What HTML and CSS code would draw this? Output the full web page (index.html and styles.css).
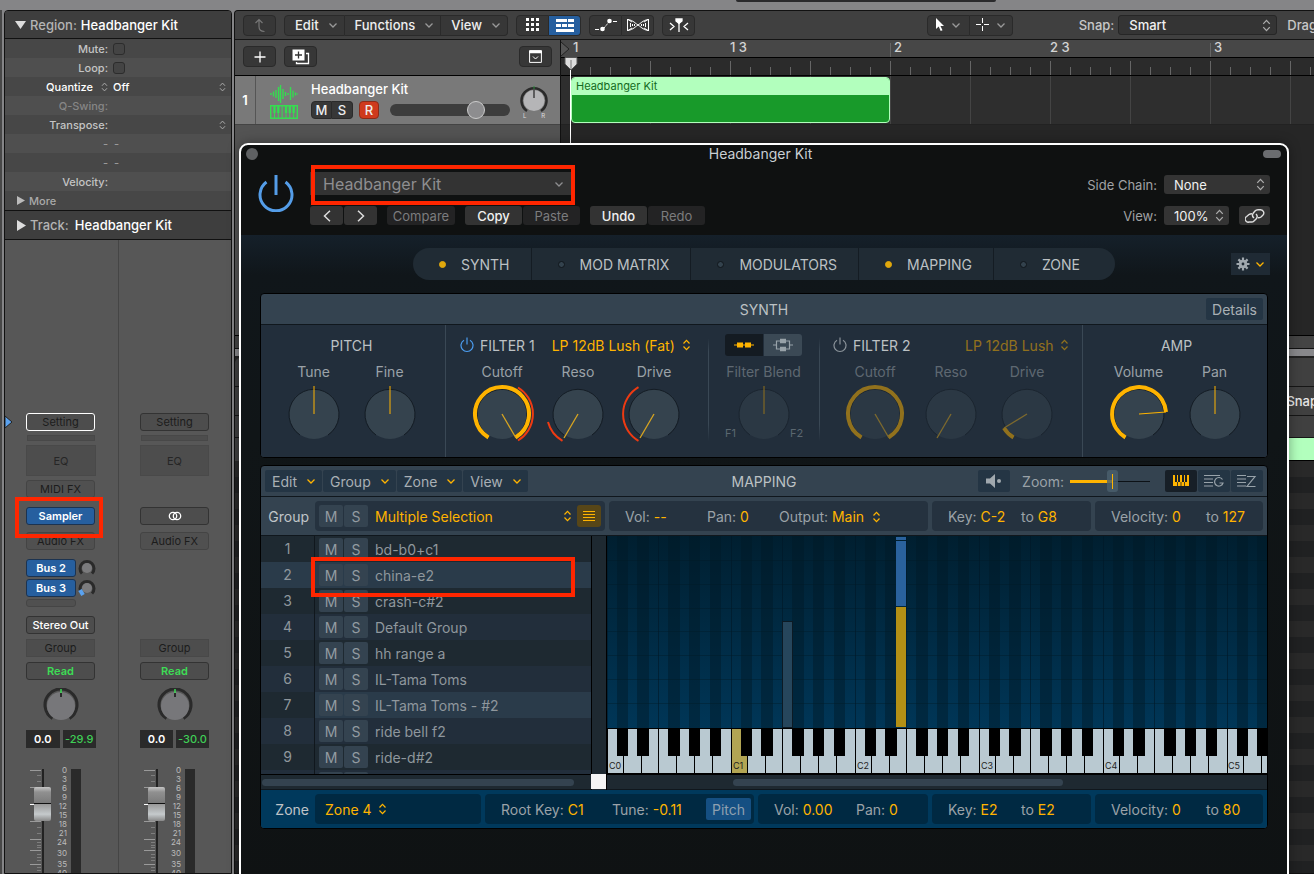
FILE: index.html
```html
<!DOCTYPE html>
<html lang="en">
<head>
  <meta charset="UTF-8">
  <meta name="viewport" content="width=device-width, initial-scale=1.0">
  <title>Headbanger Kit</title>
  <link rel="stylesheet" href="styles.css">
</head>
<body>

<!-- icon sprite -->
<svg class="sprite" width="0" height="0" aria-hidden="true">
  <symbol id="chev" viewBox="0 0 10 10"><path d="M1.500 3.500 5 7l3.500-3.500" fill="none" stroke="currentColor" stroke-width="1.300"/></symbol>
  <symbol id="updown" viewBox="0 0 8 12"><path d="M1 4.500 4 1.300l3 3.200M1 7.500l3 3.200 3-3.200" fill="none" stroke="currentColor" stroke-width="1.200"/></symbol>
  <symbol id="power" viewBox="0 0 36 38"><path d="M8.500 8A16 16 0 1 0 27.500 8M18 1v20" fill="none" stroke="currentColor" stroke-width="3"/></symbol>
  <symbol id="power-sm" viewBox="0 0 14 16"><path d="M4 3.300A6 6 0 1 0 10 3.300M7 .5v7" fill="none" stroke="currentColor" stroke-width="1.200"/></symbol>
  <symbol id="pan" viewBox="0 0 36 34">
    <path d="M9.500 30.500A16 16 0 1 1 26.500 30.500" fill="none" stroke="#2a2a2a" stroke-width="3"/>
    <circle cx="18" cy="18" r="14" fill="#77777a"/>
    <path d="M18 5v4" stroke="#111" stroke-width="1.500"/><path d="M18 1v4" stroke="#3ddc55" stroke-width="1.500"/>
  </symbol>
  <symbol id="ticks" viewBox="0 0 16 120">
    <path d="M0 1.500h11M0 18.500h11M0 52.500h11M0 70.500h11M0 81.500h11M0 95.500h11" stroke="#9a9a9a"/>
    <path d="M7 6.500h4M7 12.500h4M7 24.500h4M7 30.500h4M7 40.500h4M7 46.500h4M7 58.500h4M7 64.500h4M7 73.500h4M7 76.500h4M7 78.500h4M7 85.500h4M7 88.500h4M7 91.500h4M7 98.500h4M7 101.500h4M7 104.500h4" stroke="#7e7e7e"/>
    <path d="M0 35.500h11" stroke="#fff"/>
    <path d="M13 0v120" stroke="#222" stroke-width="2"/>
  </symbol>
  <symbol id="dial" viewBox="-32 -32 64 64"><circle r="25" fill="#35434e"/><path d="M-14 21A25 25 0 1 1 14 21" fill="none" stroke="#141c24"/></symbol>
</svg>

<div class="titlebar"><div class="lcd"></div></div>

<div class="app">
  <div class="edge"></div>

  <aside class="inspector">
    <h2 class="insp-head"><svg width="11" height="9" viewBox="0 0 11 9"><path d="M0 1h11L5.500 9z" fill="#ddd"/></svg><span>Region:</span> Headbanger Kit</h2>
    <div class="params">
      <div class="param"><label for="mute">Mute:</label><input type="checkbox" id="mute"></div>
      <div class="param"><label for="loop">Loop:</label><input type="checkbox" id="loop"></div>
      <div class="param bright"><label for="quantize">Quantize <svg width="7" height="10"><use href="#updown"/></svg></label><select id="quantize"><option>Off</option></select><svg class="end" width="7" height="10"><use href="#updown"/></svg></div>
      <div class="param dim"><span class="name">Q-Swing:</span></div>
      <div class="param"><span class="name">Transpose:</span><svg class="end" width="7" height="10"><use href="#updown"/></svg></div>
      <div class="param dash"><span class="name">-</span><span>-</span></div>
      <div class="param dash"><span class="name">-</span><span>-</span></div>
      <div class="param"><span class="name">Velocity:</span></div>
      <div class="param more"><svg width="8" height="9" viewBox="0 0 8 9"><path d="M0 0v9l8-4.500z" fill="#bbb"/></svg>More</div>
    </div>
    <h2 class="insp-head track-head"><svg width="9" height="11" viewBox="0 0 9 11"><path d="M0 0v11l9-5.500z" fill="#ddd"/></svg><span>Track:</span> Headbanger Kit</h2>

    <div class="strips">
      <section class="strip">
        <svg class="arrow" width="8" height="14" viewBox="0 0 8 14"><path d="M0 1l7 6-7 6z" fill="#5aa2f0" stroke="#222"/></svg>
        <button class="slot setting selected">Setting</button>
        <div class="thin"></div>
        <button class="eq">EQ</button>
        <button class="slot faint midi">MIDI FX</button>
        <div class="marked instrument">
          <button class="slot blue">Sampler</button>
          <div class="mark mark-sampler"></div>
        </div>
        <button class="slot faint">Audio FX</button>
        <div class="sends">
          <div class="send"><button class="slot blue">Bus 2</button><svg width="18" height="18" viewBox="0 0 18 18"><path d="M4 14.500A7 7 0 1 1 14 14.500" fill="none" stroke="#2a2a2a" stroke-width="3"/><circle cx="9" cy="9" r="5" fill="#7b7b7d"/></svg></div>
          <div class="send"><button class="slot blue">Bus 3</button><svg width="18" height="18" viewBox="0 0 18 18"><path d="M4 14.500A7 7 0 1 1 14 14.500" fill="none" stroke="#2a2a2a" stroke-width="3"/><circle cx="9" cy="9" r="5" fill="#7b7b7d"/><path d="M2 11l3 5" stroke="#5aa2f0" stroke-width="4"/></svg></div>
          <div class="stub"></div>
        </div>
        <button class="slot output">Stereo Out</button>
        <button class="slot group">Group</button>
        <button class="slot read">Read</button>
        <svg class="pan" width="36" height="34"><use href="#pan"/></svg>
        <div class="readouts"><output>0.0</output><output class="peak">-29.9</output></div>
        <div class="levels">
          <svg width="16" height="120"><use href="#ticks"/></svg>
          <input class="fader" type="range" min="0" max="100" value="80" aria-label="Volume, track 1">
          <ul class="scale"><li>0</li><li>3</li><li>6</li><li>9</li><li>12</li><li>15</li><li>18</li><li>21</li><li>24</li><li class="wide">30</li><li class="wide">35</li><li>40</li></ul>
          <div class="meter"></div>
        </div>
      </section>
      <section class="strip">
        <button class="slot setting">Setting</button>
        <div class="thin"></div>
        <button class="eq">EQ</button>
        <div class="slot-gap"></div>
        <div class="instrument">
          <button class="slot" aria-label="Stereo"><svg width="14" height="10" viewBox="0 0 14 10" fill="none" stroke="#fff" stroke-width="1.300"><circle cx="5" cy="5" r="3.700"/><circle cx="9" cy="5" r="3.700"/></svg></button>
        </div>
        <button class="slot faint">Audio FX</button>
        <div class="sends"></div>
        <div class="slot-gap out-gap"></div>
        <button class="slot group">Group</button>
        <button class="slot read">Read</button>
        <svg class="pan" width="36" height="34"><use href="#pan"/></svg>
        <div class="readouts"><output>0.0</output><output class="peak">-30.0</output></div>
        <div class="levels">
          <svg width="16" height="120"><use href="#ticks"/></svg>
          <input class="fader" type="range" min="0" max="100" value="80" aria-label="Volume, output">
          <ul class="scale"><li>0</li><li>3</li><li>6</li><li>9</li><li>12</li><li>15</li><li>18</li><li>21</li><li>24</li><li class="wide">30</li><li class="wide">35</li><li>40</li></ul>
          <div class="meter"></div>
        </div>
      </section>
    </div>
  </aside>

  <main class="workspace">
    <div class="toolbar">
      <button class="tool wide dim" aria-label="Up"><svg width="12" height="15" viewBox="0 0 12 15" fill="none" stroke="currentColor" stroke-width="1.200"><path d="M1.500 5 5 1.500 8.500 5M5 2v6.500q0 5 5.500 5"/></svg></button>
      <div class="segs">
        <button class="tool menu">Edit <svg width="10" height="10"><use href="#chev"/></svg></button>
        <button class="tool menu">Functions <svg width="10" height="10"><use href="#chev"/></svg></button>
        <button class="tool menu">View <svg width="10" height="10"><use href="#chev"/></svg></button>
      </div>
      <div class="segs">
        <button class="tool wide" aria-label="Grid"><svg width="14" height="14" viewBox="0 0 14 14" fill="#fff"><path d="M0 0h3v3H0zM5 0h3v3H5zM10 0h3v3h-3zM0 5h3v3H0zM5 5h3v3H5zM10 5h3v3h-3zM0 10h3v3H0zM5 10h3v3H5zM10 10h3v3h-3z"/></svg></button>
        <button class="tool wide on" aria-label="Regions"><svg width="18" height="13" viewBox="0 0 18 13" fill="#fff"><path d="M0 0h11v3H0zM12 0h6v3h-6zM0 5h5v3H0zM6 5h5v3H6zM12 5h6v3h-6zM0 10h18v3H0z"/></svg></button>
      </div>
      <div class="segs">
        <button class="tool wide" aria-label="Automation"><svg width="22" height="14" viewBox="0 0 22 14"><path d="M0 11.500h4M18 3.500h4" stroke="#fff"/><path d="M9 10l5-6" stroke="#fff" stroke-dasharray="2 1"/><circle cx="7.500" cy="11" r="2.300" fill="#fff"/><circle cx="14.500" cy="3" r="2.300" fill="#fff"/></svg></button>
        <button class="tool wide" aria-label="Flex"><svg width="22" height="14" viewBox="0 0 22 14" fill="none" stroke="#fff"><path d="M.5 1v12M21.500 1v12M1 1.500C6 2 9 6 11 7s5 5 10 5.500M1 12.500C6 12 9 8 11 7s5-5 10-5.500M1 1.500l4 2.500M1 12.500l4-2.500M21 1.500l-4 2.500M21 12.500l-4-2.500"/><path d="M3.500 5v4M5.500 6v2M7.500 6v2M14.500 6v2M16.500 6v2M18.500 5v4"/></svg></button>
      </div>
      <button class="tool wide" aria-label="Catch"><svg width="20" height="14" viewBox="0 0 20 14" fill="none" stroke="#fff" stroke-width="1.300"><path d="M1 5l4 3.500L1 12M19 5l-4 3.500L19 12M10 4v10"/><path d="M7 1h6v2l-3 2.500L7 3z" fill="#fff"/></svg></button>
      <div class="tool-right">
        <div class="segs">
          <button class="tool pair" aria-label="Pointer tool"><svg width="10" height="14" viewBox="0 0 10 14"><path d="M1 0v11l2.700-2.500L5.700 13l1.800-.8-2-4.200H9z" fill="#fff"/></svg><svg width="10" height="10"><use href="#chev"/></svg></button>
          <button class="tool pair" aria-label="Marquee tool"><svg width="14" height="14" viewBox="0 0 14 14"><path d="M6.500 0v5M6.500 8v5M0 6.500h5M8 6.500h5" stroke="#fff"/></svg><svg width="10" height="10"><use href="#chev"/></svg></button>
        </div>
        <label class="snap-label" for="snap">Snap:</label>
        <span class="picker snap"><select id="snap"><option>Smart</option></select><svg width="9" height="13"><use href="#updown"/></svg></span>
        <span class="drag">Drag:</span>
      </div>
    </div>

    <div class="arrange">
      <div class="track-col">
        <div class="track-tools">
          <button class="tool wide" aria-label="Add track"><svg width="12" height="12" viewBox="0 0 12 12"><path d="M6 .5v11M.5 6h11" stroke="#fff" stroke-width="1.300"/></svg></button>
          <button class="tool wide" aria-label="Duplicate track"><svg width="18" height="16" viewBox="0 0 18 16"><path d="M.5.5h12v11H.5z" fill="#fff"/><path d="M6.500 2.500v7M3 6h7" stroke="#333" stroke-width="1.300"/><path d="M14 4.500h2.500v10H4.500V13" fill="none" stroke="#fff" stroke-width="1.300"/></svg></button>
          <button class="tool wide last" aria-label="Header options"><svg width="13" height="13" viewBox="0 0 13 13" fill="none" stroke="#fff"><path d="M.6.6h11.800v11.800H.6z"/><path d="M0 2h13" stroke-width="2.500"/><path d="M4 6.500 6.500 9 9 6.500"/></svg></button>
        </div>
        <div class="track">
          <div class="track-no">1</div>
          <svg class="track-icon" width="28" height="36" viewBox="0 0 28 36">
            <path d="M1 9v2M3.500 7.500v5M6 6v8M8.500 3v14M10.500 1v18M13 5v10M15.500 8v4M18 9v2M20.500 3v13M23 6.500v7M25.500 8.500v3M27.500 9.500v1" stroke="#35dd50" stroke-width="1.400"/>
            <path d="M.7 21.700h26.600v12.600H.7z" fill="none" stroke="#35dd50" stroke-width="1.400"/>
            <path d="M4.500 22v12M8.300 22v12M12.100 22v12M16 22v12M19.800 22v12M23.600 22v12" stroke="#35dd50"/>
            <path d="M4.500 22v7M8.300 22v7M16 22v7M19.800 22v7M23.600 22v7" stroke="#35dd50" stroke-width="2.400"/>
          </svg>
          <div class="track-main">
            <div class="track-name">Headbanger Kit</div>
            <div class="track-ctl">
              <div class="segs ms"><button class="tool">M</button><button class="tool">S</button></div>
              <button class="tool rec">R</button>
              <input class="vol" type="range" min="0" max="100" value="75" aria-label="Track volume">
            </div>
          </div>
          <div class="track-pan">
            <svg width="28" height="28" viewBox="0 0 28 28"><path d="M7 25A12.500 12.500 0 1 1 21 25" fill="none" stroke="#2a2a2a" stroke-width="2.500"/><circle cx="14" cy="14.500" r="10.500" fill="#b5b5b7"/><path d="M14 4v8" stroke="#222" stroke-width="1.200"/><path d="M14 0v3" stroke="#2a8c3a"/></svg>
            <div class="lr"><span>L</span><span>R</span></div>
          </div>
        </div>
      </div>

      <div class="timeline">
        <div class="bars">
          <svg class="cycle" width="9" height="17" viewBox="0 0 9 17"><path d="M0 2l8 7-8 7" fill="#555" stroke="#222"/></svg>
          <span class="bar">1</span><span>1 3</span><span class="bar line">2</span><span>2 3</span><span class="bar line">3</span>
        </div>
        <div class="ticks"></div>
        <div class="lane"><div class="region"><span>Headbanger Kit</span></div></div>
        <div class="playhead"><svg width="14" height="14" viewBox="0 0 14 14"><path d="M1 .5h12v6.500l-6 6-6-6z" fill="#ddd" stroke="#555"/><path d="M7 3v9" stroke="#777"/></svg></div>
      </div>
    </div>

    <div class="divider"></div>
    <div class="editor">
      <div class="ed-row"></div>
      <div class="ed-row snap-row"><span>Snap:</span></div>
      <div class="ed-row short"></div>
      <div class="ed-region"></div>
      <div class="roll"></div>
    </div>
  </main>

  <section class="plugin" aria-label="Sampler">
    <header class="plug-title"><span class="close"></span><span>Headbanger Kit</span><span class="pill"></span></header>

    <div class="plug-bar">
      <button class="plug-power" aria-label="Power"><svg width="36" height="38"><use href="#power"/></svg></button>
      <div class="preset-col">
        <div class="marked preset">
          <select aria-label="Preset"><option>Headbanger Kit</option></select>
          <svg width="10" height="10"><use href="#chev"/></svg>
          <div class="mark mark-preset"></div>
        </div>
        <div class="preset-btns">
          <div class="pair"><button class="nav" aria-label="Previous"><svg width="8" height="12" viewBox="0 0 8 12"><path d="M7 .7 1.500 6 7 11.300" fill="none" stroke="#ddd" stroke-width="1.500"/></svg></button><button class="nav" aria-label="Next"><svg width="8" height="12" viewBox="0 0 8 12"><path d="M1 .7 6.500 6 1 11.300" fill="none" stroke="#ddd" stroke-width="1.500"/></svg></button></div>
          <button class="off cmp">Compare</button>
          <div class="pair"><button>Copy</button><button class="off">Paste</button></div>
          <div class="pair"><button>Undo</button><button class="off">Redo</button></div>
        </div>
      </div>
      <div class="plug-opts">
        <div class="opt"><label for="side">Side Chain:</label><span class="picker side"><select id="side"><option>None</option></select><svg width="9" height="13"><use href="#updown"/></svg></span></div>
        <div class="opt"><label for="view">View:</label><span class="picker zoomsel"><select id="view"><option>100%</option></select><svg width="9" height="13"><use href="#updown"/></svg></span>
          <button class="link" aria-label="Link"><svg width="20" height="14" viewBox="0 0 20 14" fill="none" stroke="#ddd" stroke-width="1.400"><path d="M9 9a3.500 3.500 0 0 1-1-4.500l2-2.500q1-1.300 3-1.300h2.500a3.200 3.200 0 0 1 2.300 5.500L16 8q-1 .8-3 .8"/><path d="M11 5a3.500 3.500 0 0 1 .5 4.500L9 12a3.500 3.500 0 0 1-3 1H4a3 3 0 0 1-2.300-5.500L4 5.500q1-.8 3-.8"/></svg></button></div>
      </div>
    </div>

    <div class="plug-body">
      <div class="tab-row">
        <nav class="tabs">
          <button class="on"><i></i>SYNTH</button><button><i></i>MOD MATRIX</button><button><i></i>MODULATORS</button><button class="on"><i></i>MAPPING</button><button><i></i>ZONE</button>
        </nav>
        <button class="gear" aria-label="Settings"><svg width="14" height="14" viewBox="-7 -7 14 14"><path d="M0-6.500V6.500M-6.500 0H6.500M-4.600-4.600 4.600 4.600M-4.600 4.600 4.600-4.600" stroke="#a0a8ae" stroke-width="2.200"/><circle r="4.300" fill="#a0a8ae"/><circle r="1.400" fill="#1f2a34"/></svg><svg class="gold" width="10" height="10"><use href="#chev"/></svg></button>
      </div>

      <section class="panel">
        <header class="panel-head"><span></span><h3>SYNTH</h3><div class="head-end"><button class="chip details">Details</button></div></header>
        <div class="synth">
          <div class="sec center pitch-sec">
            <h4>PITCH</h4>
            <div class="knobs">
              <div class="knob"><span>Tune</span><svg width="64" height="64" viewBox="-32 -32 64 64"><use href="#dial" x="-32" y="-32" width="64" height="64"/><path class="ptr" d="M0 0v-28"/></svg></div>
              <div class="knob"><span>Fine</span><svg width="64" height="64" viewBox="-32 -32 64 64"><use href="#dial" x="-32" y="-32" width="64" height="64"/><path class="ptr" d="M0 0v-28"/></svg></div>
            </div>
          </div>
          <div class="sec rule">
            <h4><button class="pw on" aria-label="Filter 1 power"><svg width="14" height="16"><use href="#power-sm"/></svg></button>FILTER 1 <span class="ftype"><select aria-label="Filter 1 type"><option>LP 12dB Lush (Fat)</option></select><svg width="9" height="12"><use href="#updown"/></svg></span></h4>
            <div class="knobs">
              <div class="knob"><span>Cutoff</span><svg width="64" height="64" viewBox="-32 -32 64 64"><use href="#dial" x="-32" y="-32" width="64" height="64"/><path class="arc" d="M-13.500 23.400A27 27 0 1 1 13.500 23.400"/><path class="ptr thin-ptr" d="M0 0l14 24"/><path class="mod" d="M16-26.500A31 31 0 0 1 16 26.500"/></svg></div>
              <div class="knob"><span>Reso</span><svg width="64" height="64" viewBox="-32 -32 64 64"><use href="#dial" x="-32" y="-32" width="64" height="64"/><path class="ptr thin-ptr" d="M0 0l-14 24"/><path class="mod" d="M-30 8A31 31 0 0 0-15.500 26.800"/></svg></div>
              <div class="knob"><span>Drive</span><svg width="64" height="64" viewBox="-32 -32 64 64"><use href="#dial" x="-32" y="-32" width="64" height="64"/><path class="ptr thin-ptr" d="M0 0l-14 24"/><path class="mod" d="M-15.500-26.800A31 31 0 0 0-15.500 26.800"/></svg></div>
            </div>
          </div>
          <div class="sec center soft">
            <h4 class="routing"><button class="on" aria-label="Series"><svg width="20" height="10" viewBox="0 0 20 10"><path d="M0 5h20" stroke="#ffb400"/><path d="M3 2.500h6v5H3zM11 2.500h6v5h-6z" fill="#ffb400"/></svg></button><button aria-label="Parallel"><svg width="20" height="14" viewBox="0 0 20 14"><path d="M0 7h3.500V3h13v8h-13V7M16.500 7H20" fill="none" stroke="#98a2a9" stroke-width="1.200"/><path d="M7 .8h6v4.500H7zM7 8.700h6v4.500H7z" fill="#98a2a9"/></svg></button></h4>
            <div class="knobs blend">
              <em>F1</em>
              <div class="knob faded"><span>Filter Blend</span><svg width="64" height="64" viewBox="-32 -32 64 64"><use href="#dial" x="-32" y="-32" width="64" height="64"/><path class="ptr" d="M0 0v-28"/></svg></div>
              <em>F2</em>
            </div>
          </div>
          <div class="sec soft">
            <h4><button class="pw" aria-label="Filter 2 power"><svg width="14" height="16"><use href="#power-sm"/></svg></button>FILTER 2 <span class="ftype end faded"><select aria-label="Filter 2 type"><option>LP 12dB Lush</option></select><svg width="9" height="12"><use href="#updown"/></svg></span></h4>
            <div class="knobs">
              <div class="knob faded"><span>Cutoff</span><svg width="64" height="64" viewBox="-32 -32 64 64"><use href="#dial" x="-32" y="-32" width="64" height="64"/><path class="arc" d="M-13.500 23.400A27 27 0 1 1 13.500 23.400"/><path class="ptr thin-ptr" d="M0 0l14 24"/></svg></div>
              <div class="knob faded"><span>Reso</span><svg width="64" height="64" viewBox="-32 -32 64 64"><use href="#dial" x="-32" y="-32" width="64" height="64"/><path class="ptr thin-ptr" d="M0 0l-14 24"/></svg></div>
              <div class="knob faded"><span>Drive</span><svg width="64" height="64" viewBox="-32 -32 64 64"><use href="#dial" x="-32" y="-32" width="64" height="64"/><path class="arc" d="M-13.500 23.400A27 27 0 0 1-23 14"/><path class="ptr thin-ptr" d="M0 0l-23 14"/></svg></div>
            </div>
          </div>
          <div class="sec center rule amp-sec">
            <h4>AMP</h4>
            <div class="knobs">
              <div class="knob"><span>Volume</span><svg width="64" height="64" viewBox="-32 -32 64 64"><use href="#dial" x="-32" y="-32" width="64" height="64"/><path class="arc" d="M-13.500 23.400A27 27 0 1 1 27-2"/><path class="ptr" d="M0 0l27-2"/></svg></div>
              <div class="knob"><span>Pan</span><svg width="64" height="64" viewBox="-32 -32 64 64"><use href="#dial" x="-32" y="-32" width="64" height="64"/><path class="ptr" d="M0 0v-28"/></svg></div>
            </div>
          </div>
        </div>
      </section>

      <section class="panel">
        <header class="panel-head">
          <div class="menus"><button class="chip">Edit <svg width="10" height="10"><use href="#chev"/></svg></button><button class="chip">Group <svg width="10" height="10"><use href="#chev"/></svg></button><button class="chip">Zone <svg width="10" height="10"><use href="#chev"/></svg></button><button class="chip">View <svg width="10" height="10"><use href="#chev"/></svg></button></div>
          <h3>MAPPING</h3>
          <div class="head-end">
            <button class="chip icon" aria-label="Audition"><svg width="16" height="14" viewBox="0 0 16 14" fill="#a0a8ae"><path d="M0 4.500h4L9 0v14L4 9.500H0z"/><circle cx="13" cy="7" r="2"/></svg></button>
            <label for="zoom">Zoom:</label><input class="zoom" id="zoom" type="range" min="0" max="100" value="54">
            <div class="views">
              <button class="chip icon on" aria-label="Key map"><svg width="16" height="12" viewBox="0 0 16 12"><path d="M0 0h2v7h2V0h1v7h2V0h2v7h2V0h1v7h2V0h2v11H0z" fill="#ffb400"/><path d="M4.500 7v4M8 7v4M11.500 7v4" stroke="#17202a" stroke-width=".8"/></svg></button><button class="chip icon" aria-label="Group list"><svg width="20" height="14" viewBox="0 0 20 14" fill="none" stroke="#98a2a9" stroke-width="1.200"><path d="M0 1.500h16M0 5h9M0 8.500h9M0 12h9M18.500 5.500A4.300 4.300 0 1 0 19 9h-3.500"/></svg></button><button class="chip icon" aria-label="Zone list"><svg width="20" height="14" viewBox="0 0 20 14" fill="none" stroke="#98a2a9" stroke-width="1.200"><path d="M0 1.500h9M0 5h9M0 8.500h9M0 12h9M10 2.500h8L10 12.500h8.500"/></svg></button>
            </div>
          </div>
        </header>

        <div class="row-bar">
          <span class="row-title">Group</span>
          <div class="box b-name"><div class="mute-solo"><button>M</button><button>S</button></div><span class="gsel"><select aria-label="Group"><option>Multiple Selection</option></select><svg width="9" height="12"><use href="#updown"/></svg></span><button class="list-btn" aria-label="Group list"><svg width="12" height="12" viewBox="0 0 12 12"><path d="M0 1.500h12M0 4.500h12M0 7.500h12M0 10.500h12" stroke="#ffb400"/></svg></button></div>
          <div class="box"><span class="f82">Vol: <b>--</b></span><span class="f72">Pan: <b>0</b></span><span>Output: <b>Main</b> <svg class="gold" width="9" height="12"><use href="#updown"/></svg></span></div>
          <div class="box"><span class="f73">Key: <b>C-2</b></span><span>to <b>G8</b></span></div>
          <div class="box"><span class="f95">Velocity: <b>0</b></span><span>to <b>127</b></span></div>
        </div>

        <div class="map">
          <div class="list-col">
            <div class="rows">
              <div class="row"><span class="no">1</span><div class="mute-solo"><button>M</button><button>S</button></div>bd-b0+c1</div>
              <div class="row sel marked"><span class="no">2</span><div class="mute-solo"><button>M</button><button>S</button></div>china-e2<div class="mark mark-row"></div></div>
              <div class="row"><span class="no">3</span><div class="mute-solo"><button>M</button><button>S</button></div>crash-c#2</div>
              <div class="row"><span class="no">4</span><div class="mute-solo"><button>M</button><button>S</button></div>Default Group</div>
              <div class="row"><span class="no">5</span><div class="mute-solo"><button>M</button><button>S</button></div>hh range a</div>
              <div class="row"><span class="no">6</span><div class="mute-solo"><button>M</button><button>S</button></div>IL-Tama Toms</div>
              <div class="row sel odd"><span class="no">7</span><div class="mute-solo"><button>M</button><button>S</button></div>IL-Tama Toms - #2</div>
              <div class="row"><span class="no">8</span><div class="mute-solo"><button>M</button><button>S</button></div>ride bell f2</div>
              <div class="row"><span class="no">9</span><div class="mute-solo"><button>M</button><button>S</button></div>ride-d#2</div>
              <div class="row stub-row"><span class="no"></span><div class="mute-solo"><button aria-label="Mute"></button><button aria-label="Solo"></button></div></div>
            </div>
            <div class="scroll"><div class="thumb"></div></div>
          </div>
          <div class="gutter"><div></div><i></i></div>
          <div class="key-col">
            <svg class="zones" width="100%" height="192">
              <defs>
                <linearGradient id="deep" x1="0" y1="0" x2="0" y2="1"><stop offset="0" stop-color="#001f30"/><stop offset="1" stop-color="#003657"/></linearGradient>
                <pattern id="cells" width="124" height="192" patternUnits="userSpaceOnUse">
                  <path d="M10 0h11v192H10zM30 0h12v192H30zM61 0h12v192H61zM82 0h11v192H82zM103 0h11v192h-11z" fill="#001826" fill-opacity=".45"/>
                  <path d="M.5 0v192M51.500 0v192" stroke="#001826" stroke-opacity=".6"/>
                  <path d="M0 24.500h124M0 48.500h124M0 72.500h124M0 95.500h124M0 119.500h124M0 143.500h124M0 167.500h124" stroke="#001826" stroke-opacity=".4"/>
                </pattern>
                <pattern id="keys" width="124" height="46" patternUnits="userSpaceOnUse">
                  <path d="M.5 0v46M16.500 0v46M34.500 0v46M51.500 0v46M69.500 0v46M87.500 0v46M105.500 0v46" stroke="#000"/>
                  <path d="M10 0h11v28H10zM30 0h12v28H30zM61 0h12v28H61zM82 0h11v28H82zM103 0h11v28h-11z" fill="#000"/>
                </pattern>
              </defs>
              <rect width="100%" height="192" fill="url(#deep)"/>
              <rect width="100%" height="192" fill="url(#cells)"/>
              <rect x="175.500" y="85.500" width="10" height="106" fill="#26465c" stroke="#0c1a24"/>
              <rect x="289" y="1" width="10" height="3" fill="#2a629d"/>
              <rect x="289" y="5" width="10" height="65" fill="#2a629d"/>
              <rect x="289" y="71" width="10" height="120" fill="#b39015"/>
            </svg>
            <svg class="keyboard" width="100%" height="46">
              <rect width="100%" height="46" fill="#b9c9d1"/>
              <rect x="125" width="16" height="46" fill="#b2a553"/>
              <rect width="100%" height="46" fill="url(#keys)"/>
              <path d="M0 .5h2000M0 45.500h2000" stroke="#000"/>
              <text x="2" y="41">C0</text><text x="126" y="41">C1</text><text x="250" y="41">C2</text><text x="374" y="41">C3</text><text x="498" y="41">C4</text><text x="621" y="41">C5</text>
            </svg>
            <div class="scroll"><div class="thumb mid"></div></div>
          </div>
        </div>

        <div class="row-bar zone">
          <span class="row-title">Zone</span>
          <div class="box b-zname"><span class="ftype"><select aria-label="Zone"><option>Zone 4</option></select><svg width="9" height="12"><use href="#updown"/></svg></span></div>
          <div class="box"><span class="f111">Root Key: <b>C1</b></span><span class="f94">Tune: <b>-0.11</b></span><button class="pitch">Pitch</button></div>
          <div class="box"><span class="f82">Vol: <b>0.00</b></span><span>Pan: <b>0</b></span></div>
          <div class="box"><span class="f73">Key: <b>E2</b></span><span>to <b>E2</b></span></div>
          <div class="box"><span class="f95">Velocity: <b>0</b></span><span>to <b>80</b></span></div>
        </div>
      </section>
    </div>
  </section>
</div>

</body>
</html>
```

FILE: styles.css
```css
:root {
  --gold: #ffb400;
  --blue: #265f9f;
  --panel: #344350;
  --panel-dark: #222e3b;
  --red: #ff2600;
}
* {
  box-sizing: border-box;
}
body {
  margin: 0;
  height: 100vh;
  overflow: hidden;
  background: #858587;
  color: #e6e6e6;
  font-family: Inter, "Liberation Sans", sans-serif;
  font-size: 13px;
  display: flex;
  flex-direction: column;
}
h2, h3, h4, ul {
  margin: 0;
  padding: 0;
  font-weight: 400;
}
svg {
  display: block;
  flex: none;
}
.sprite {
  position: absolute;
}
button, select, input {
  font: inherit;
  color: inherit;
  margin: 0;
  padding: 0;
  border: 0;
  background: none;
  appearance: none;
}
button {
  display: flex;
  align-items: center;
  justify-content: center;
  white-space: nowrap;
}
.gold {
  color: var(--gold);
}

/* red outline boxes */
.marked {
  position: relative;
}
.mark {
  position: absolute;
  z-index: 2;
  border: 4px solid var(--red);
  pointer-events: none;
}
.mark-sampler { inset: -10px -8px -13px -11px; }
.mark-preset { inset: -7px -3px -10px 1px; }
.mark-row { inset: -5px 16px -9px 50px; }

/* shell */
.titlebar {
  height: 10px;
  flex: none;
}
.lcd {
  width: 260px;
  height: 2px;
  margin-left: 56%;
  background: #2a2a2c;
  border-radius: 0 0 4px 4px;
}
.app {
  position: relative;
  flex: 1;
  min-height: 0;
  display: flex;
  overflow: hidden;
}
.edge {
  width: 2px;
  margin-right: 2px;
  background: #484848;
}

/* inspector */
.inspector {
  width: 228px;
  flex: none;
  margin-right: 2px;
  border: 1px solid #111;
  border-radius: 4px 4px 0 0;
  background: #575757;
  overflow: hidden;
}
.insp-head {
  height: 28px;
  display: flex;
  align-items: center;
  gap: 4px;
  padding-left: 10px;
  background: #3e3e3e;
  border-bottom: 1px solid #111;
  font-size: 13px;
  font-weight: 500;
  color: #fff;
}
.insp-head span {
  color: #b4b4b4;
}
.track-head {
  height: 30px;
  border-top: 1px solid #111;
  padding-left: 12px;
}
.track-head span {
  margin-right: 2px;
}
.param {
  height: 19px;
  display: flex;
  align-items: center;
  gap: 5px;
  font-size: 11px;
  font-weight: 500;
  color: #c4c4c4;
  background: #474747;
  padding-right: 5px;
}
.param:nth-child(even) {
  background: #4f4f4f;
}
.param label, .param .name {
  width: 103px;
  display: flex;
  justify-content: flex-end;
  align-items: center;
  gap: 8px;
}
.param.bright { color: #fff; }
.param.bright svg, .param .end { color: #aaa; }
.param.dim { color: #868686; }
.param.dash { gap: 6px; color: #999; }
.param.more {
  padding-left: 12px;
  gap: 4px;
  color: #aaa;
}
.param .end {
  margin-left: auto;
}
.param input {
  width: 12px;
  height: 12px;
  border: 1px solid #2c2c2c;
  border-radius: 3px;
  background: #444;
}

/* channel strips */
.strips {
  display: flex;
}
.strip {
  position: relative;
  flex: 1;
  padding: 173px 22px 0 21px;
  display: flex;
  flex-direction: column;
  font-size: 11px;
}
.strip + .strip {
  border-left: 1px solid #454545;
}
.arrow {
  position: absolute;
  left: 0;
  top: 175px;
}
.slot {
  width: 69px;
  height: 18px;
  border: 1px solid #333;
  border-radius: 3px;
  background: #4d4d4d;
  color: #1c1c1c;
}
.slot.selected { border-color: #fff; }
.slot.blue {
  background: var(--blue);
  border-color: #1c3350;
  color: #fff;
  font-weight: 600;
}
.slot.faint {
  background: #505050;
  border-color: #444;
}
.slot.midi { margin-top: 4px; }
.thin {
  height: 6px;
  margin: 4px 1px;
  background: #4d4d4d;
  border: 1px solid #484848;
}
.eq {
  height: 31px;
  color: #262626;
  background: #4d4d4d;
  border: 1px solid #494949;
}
.slot-gap {
  height: 18px;
  margin-top: 4px;
}
.instrument {
  width: 69px;
  margin: 9px 0 7px;
}
.sends {
  height: 48px;
  margin: 9px 0;
  display: flex;
  flex-direction: column;
  gap: 2px;
}
.send {
  display: flex;
  gap: 2px;
}
.send .slot {
  width: 50px;
}
.stub {
  width: 50px;
  height: 8px;
  border: 1px solid #454545;
  border-radius: 3px;
  background: #505050;
}
.slot.output {
  color: #fff;
  font-weight: 500;
}
.out-gap { margin-top: 0; }
.slot.group {
  margin: 5px 0;
  border-color: #484848;
  border-radius: 0;
}
.slot.read {
  color: #3ddc55;
  font-weight: 600;
}
.pan {
  margin: 8px 0 8px 17px;
}
.readouts {
  display: flex;
  gap: 3px;
}
.readouts output {
  flex: 1;
  height: 18px;
  line-height: 18px;
  text-align: center;
  background: #2a2a2a;
  color: #fff;
  font-weight: 600;
}
.readouts .peak {
  color: #3fcf56;
  font-weight: 500;
}
.levels {
  position: relative;
  display: flex;
  margin: 21px 0 0 4px;
}
.fader {
  position: absolute;
  left: 4px;
  top: 0;
  width: 17px;
  height: 126px;
  writing-mode: vertical-lr;
  direction: rtl;
}
.fader::-webkit-slider-thumb {
  appearance: none;
  width: 17px;
  height: 34px;
  border-radius: 2px;
  background: linear-gradient(#c5c5c5, #909090 15%, #7a7a7a 48%, #111 48%, #111 51%, #9a9a9a 51%, #c5cacc 80%, #888);
}
.scale {
  width: 21px;
  list-style: none;
  text-align: right;
  font-size: 8px;
  line-height: 9px;
  color: #bbb;
  margin-top: -3px;
}
.scale .wide {
  padding-top: 2px;
}
.meter {
  width: 10px;
  height: 120px;
  margin-left: 4px;
  background: #2a2a2a;
}

/* toolbar */
.workspace {
  flex: 1;
  min-width: 0;
  border: 1px solid #111;
  border-right: 0;
  border-radius: 4px 0 0 0;
  background: #262626;
  overflow: hidden;
}
.toolbar {
  height: 29px;
  display: flex;
  align-items: center;
  gap: 8px;
  padding-left: 8px;
  background: #404040;
  border-bottom: 1px solid #151515;
}
.tool {
  height: 21px;
  border: 1px solid #2a2a2a;
  border-radius: 4px;
  background: #373737;
  color: #eee;
}
.tool.wide { width: 33px; }
.tool.dim { color: #777; }
.tool.on { background: var(--blue); }
.tool svg[width="10"][height="10"] { color: #999; }
.segs {
  display: flex;
}
.segs .tool {
  border-radius: 0;
}
.segs .tool + .tool { border-left: 0; }
.segs .tool + .wide { width: 32px; }
.segs .tool:first-child { border-radius: 4px 0 0 4px; }
.segs .tool:last-child { border-radius: 0 4px 4px 0; }
.tool.menu {
  padding: 0 6px 0 10px;
  gap: 9px;
  font-weight: 500;
}
.tool.pair {
  width: 43px;
  gap: 6px;
}
.tool-right {
  margin-left: auto;
  margin-right: -7px;
  display: flex;
  align-items: center;
  font-weight: 500;
  color: #c8c8c8;
}
.snap-label {
  margin: 0 4px 0 66px;
}
.drag { margin-left: 10px; }
.picker {
  display: flex;
  align-items: center;
  height: 20px;
  padding: 0 5px 0 10px;
  border-radius: 3px;
  background: #343434;
  color: #f0f0f0;
}
.picker select {
  flex: 1;
}
.picker svg { color: #aaa; }
.picker.snap {
  width: 159px;
  border: 1px solid #262626;
}

/* tracks */
.arrange {
  display: flex;
  height: 295px;
}
.track-col {
  width: 326px;
  background: #535353;
  border-right: 1px solid #111;
}
.track-tools {
  height: 36px;
  display: flex;
  align-items: center;
  gap: 8px;
  padding: 0 8px 2px;
  background: #4b4b4b;
  border-bottom: 1px solid #000;
}
.track-tools .last { margin-left: auto; }
.track {
  height: 49px;
  display: flex;
  background: #797979;
  border-bottom: 1px solid #444;
}
.track-no {
  width: 21px;
  display: flex;
  align-items: center;
  justify-content: center;
  color: #fff;
  font-weight: 600;
  border-right: 1px solid #555;
}
.track-icon {
  margin: 8px 13px 0 14px;
}
.track-main {
  padding-top: 4px;
  width: 199px;
}
.track-name {
  line-height: 18px;
  font-weight: 500;
  color: #fff;
}
.track-ctl {
  display: flex;
  align-items: center;
  margin-top: 3px;
}
.track-ctl .tool {
  width: 21px;
  height: 18px;
  font-weight: 500;
}
.tool.rec {
  margin: 0 11px 0 6px;
  background: #cf3a1d;
  border-color: #8c2b18;
}
.vol {
  width: 120px;
  height: 12px;
  border-radius: 6px;
  background: #3d3d3d;
}
.vol::-webkit-slider-thumb {
  appearance: none;
  width: 18px;
  height: 18px;
  border: 1px solid #ccc;
  border-radius: 50%;
  background: #8d8d8f;
}
.track-pan {
  padding: 10px 0 0 10px;
}
.lr {
  display: flex;
  justify-content: space-between;
  padding: 0 3px;
  margin-top: -1px;
  font-size: 6px;
  line-height: 6px;
  color: #ddd;
}
.timeline {
  position: relative;
  flex: 1;
  min-width: 0;
  overflow: hidden;
}
.bars {
  height: 18px;
  display: flex;
  background: #474747;
  border-bottom: 1px solid #000;
  font-weight: 500;
  line-height: 15px;
  color: #d4d4d4;
}
.bars span {
  flex: none;
  width: 160px;
}
.bars .bar { padding-left: 3px; }
.bars .line {
  margin-top: 3px;
  line-height: 9px;
  border-left: 1px solid #666;
}
.ticks {
  height: 18px;
  border-bottom: 1px solid #000;
  background:
    repeating-linear-gradient(90deg, #666 0 1px, transparent 1px 80px) 9px 3px / 100% 15px no-repeat,
    repeating-linear-gradient(90deg, #666 0 1px, transparent 1px 20px) 9px 9px / 100% 9px no-repeat,
    #2b2b2b;
}
.lane {
  height: 49px;
  padding: 1px 0 0 10px;
  border-bottom: 1px solid #222;
  background: repeating-linear-gradient(90deg, #444 0 1px, transparent 1px 80px) 9px 0 no-repeat #2e2e2e;
}
.region {
  width: 319px;
  height: 46px;
  border: 1px solid #b2ffbd;
  border-radius: 4px;
  background: #189a2a;
  overflow: hidden;
}
.region span {
  display: block;
  padding-left: 4px;
  height: 17px;
  line-height: 16px;
  font-size: 11px;
  color: #146b22;
  background: #b2ffbd;
}
.playhead {
  position: absolute;
  left: 3px;
  top: 17px;
  width: 14px;
  height: 100%;
  background: linear-gradient(#fff, #fff) 6px 0 / 1px 100% no-repeat;
}

/* editor area behind the plug-in window */
.divider {
  height: 23px;
  border-top: 1px solid #000;
  border-bottom: 2px solid #222;
  background: linear-gradient(#444 0 12px, #111 12px 13px, #88888b 13px);
}
.editor {
  border-radius: 5px 0 0 0;
  background: #404040;
}
.ed-row {
  height: 29px;
  border-bottom: 1px solid #161616;
}
.ed-row.short { height: 22px; }
.snap-row {
  display: flex;
  align-items: center;
  justify-content: flex-end;
  margin-right: -8px;
  font-weight: 500;
}
.ed-region {
  height: 23px;
  margin-left: 300px;
  background: #b2ffbd;
  border-bottom: 1px solid #000;
}
.roll {
  height: 420px;
  background: repeating-linear-gradient(#292929 0 16px, #202122 16px 32px);
}

/* plug-in window */
.plugin {
  position: absolute;
  left: 239px;
  right: 25px;
  top: 133px;
  bottom: -12px;
  border: 2px solid #fff;
  border-radius: 9px;
  background: #0f1111;
  overflow: hidden;
  box-shadow: 0 0 12px rgba(0, 0, 0, .35);
}
.plug-title {
  height: 18px;
  padding: 0 6px 0 5px;
  display: flex;
  align-items: center;
  justify-content: space-between;
  font-size: 14px;
  line-height: 16px;
  color: #c9cfd3;
}
.close {
  width: 12px;
  height: 12px;
  border-radius: 50%;
  background: #5f6163;
}
.pill {
  width: 18px;
  height: 8px;
  border-radius: 4px;
  background: #6b6d70;
}
.plug-bar {
  height: 72px;
  display: flex;
  padding: 9px 17px 0;
}
.plug-power {
  width: 36px;
  align-self: flex-start;
  margin-top: 2px;
  color: #549de8;
}
.preset-col {
  margin-left: 16px;
}
.preset {
  width: 262px;
  height: 23px;
  display: flex;
  align-items: center;
  padding: 0 8px 0 13px;
  background: #333;
  color: #8e8e90;
}
.preset select {
  flex: 1;
  font-size: 16px;
}
.preset-btns {
  display: flex;
  gap: 10px;
  margin-top: 11px;
}
.pair {
  display: flex;
  gap: 1px;
}
.preset-btns button {
  height: 19px;
  min-width: 57px;
  background: #333;
  border-radius: 3px;
  color: #f0f0f0;
  font-weight: 500;
}
.preset-btns .nav { min-width: 33px; }
.preset-btns .cmp { min-width: 68px; }
.preset-btns .off {
  background: #232324;
  color: #7c7c7e;
  font-weight: 400;
}
.plug-opts {
  margin: 3px 0 0 auto;
  display: flex;
  flex-direction: column;
  gap: 12px;
  width: 190px;
}
.opt {
  display: flex;
  height: 19px;
  align-items: center;
}
.opt label {
  width: 77px;
  margin-right: 7px;
  display: flex;
  justify-content: flex-end;
  white-space: nowrap;
  color: #a0a2a4;
}
.opt .picker { height: 19px; }
.side { width: 106px; }
.zoomsel { width: 65px; }
.link {
  width: 31px;
  height: 19px;
  margin-left: auto;
  border-radius: 3px;
  background: #333;
}
.plug-body {
  min-height: 660px;
  padding: 13px 19px 0;
  background: linear-gradient(#15202a, #10161a 40px, #101517 200px, #0f1213);
  font-size: 14px;
  color: #9ba2a8;
}
.tab-row {
  display: flex;
  justify-content: center;
  position: relative;
}
.tabs {
  display: flex;
  border-radius: 16px;
  background: #202b34;
}
.tabs button {
  height: 32px;
  padding: 0 21px 0 26px;
  gap: 15px;
  color: #bcc1c4;
}
.tabs button + button {
  border-left: 1px solid #141c23;
}
.tabs button:last-child {
  padding-right: 35px;
}
.tabs i {
  width: 7px;
  height: 7px;
  border-radius: 50%;
  background: #33424d;
  border: 1px solid #10161b;
}
.tabs .on i {
  background: #e0a80c;
  border-color: #e0a80c;
}
.gear {
  position: absolute;
  right: -2px;
  top: 5px;
  width: 39px;
  height: 22px;
  gap: 5px;
  background: #1f2a34;
}

.panel {
  margin-top: 13px;
  border: 1px solid #000;
  border-radius: 4px;
  background: var(--panel);
  overflow: hidden;
}
.panel + .panel {
  margin-top: 7px;
}
.panel-head {
  height: 31px;
  padding: 0 4px;
  display: grid;
  grid-template-columns: 1fr auto 1fr;
  align-items: center;
  border-bottom: 1px solid #10171d;
}
.panel-head h3 {
  font-size: 14px;
  color: #bcc1c4;
}
.head-end {
  display: flex;
  justify-content: flex-end;
  align-items: center;
}
.chip {
  height: 22px;
  padding: 0 6px 0 7px;
  gap: 9px;
  border-radius: 2px;
  background: #243544;
  color: #a9b0b5;
}
.chip svg[width="10"] { color: var(--gold); }
.chip.icon {
  width: 32px;
  padding: 0;
}
.chip.on { background: #171f27; }
.chip.details { padding: 0 6px; }
.menus, .views {
  display: flex;
  gap: 1px;
}
.head-end label {
  margin: 0 6px 0 12px;
}
.zoom {
  width: 80px;
  height: 22px;
  margin-right: 15px;
  background:
    linear-gradient(var(--gold), var(--gold)) 0 50% / 54% 3px no-repeat,
    linear-gradient(#0c1116, #0c1116) 0 50% / 100% 1px no-repeat;
}
.zoom::-webkit-slider-thumb {
  appearance: none;
  width: 11px;
  height: 22px;
  border-radius: 3px;
  background: linear-gradient(var(--gold), var(--gold)) 50% 50% / 1px 15px no-repeat rgba(75, 96, 110, .8);
}

/* synth section */
.synth {
  height: 132px;
  display: grid;
  grid-template-columns: 185fr 262fr 111fr 264fr 184fr;
  background: var(--panel-dark);
}
.sec {
  position: relative;
  padding: 9px 0 0;
}
.pitch-sec { padding-right: 4px; }
.amp-sec { padding-left: 3px; }
.sec.rule {
  box-shadow: -1px 0 #3a4855;
}
.sec.soft {
  background: linear-gradient(transparent 10%, #3a4855 20%, #3a4855 75%, transparent 88%) 0 0 / 1px 100% no-repeat;
}
.sec h4 {
  height: 22px;
  display: flex;
  align-items: center;
  padding: 0 14px;
  font-size: 14px;
  color: #bcc1c4;
  white-space: nowrap;
}
.pw {
  margin-right: 6px;
  color: #8a9299;
}
.pw.on { color: #4b9df0; }
.ftype {
  display: flex;
  align-items: center;
  gap: 6px;
  margin-left: 17px;
  color: var(--gold);
}
.ftype.end {
  margin-left: auto;
}
.faded {
  opacity: .5;
}
.knobs {
  display: flex;
  padding-left: 18px;
  margin-top: 6px;
}
.center h4, .center .knobs {
  justify-content: center;
  padding: 0;
}
.knob {
  width: 76px;
  display: flex;
  flex-direction: column;
  align-items: center;
  white-space: nowrap;
}
.knob span {
  line-height: 20px;
}
.knob svg {
  overflow: visible;
}
.ptr {
  stroke: var(--gold);
  stroke-width: 1;
}
.thin-ptr {
  stroke: #d9a520;
  stroke-width: 1.300;
}
.arc {
  fill: none;
  stroke: var(--gold);
  stroke-width: 4;
}
.mod {
  fill: none;
  stroke: #ee3a12;
  stroke-width: 2;
}
.routing {
  gap: 1px;
}
.routing button {
  width: 38px;
  height: 22px;
  border-radius: 0 3px 3px 0;
  background: #3b4955;
}
.routing .on {
  border-radius: 3px 0 0 3px;
  background: #141b22;
}
.blend em {
  width: 12px;
  padding-bottom: 6px;
  align-self: flex-end;
  font-size: 11px;
  font-style: normal;
  color: #5b6770;
}
.blend .knob { width: 53px; }

/* group and zone rows */
.row-bar {
  height: 39px;
  display: grid;
  grid-template-columns: 50px 290fr 319fr 159fr 168fr;
  align-items: center;
  gap: 4px;
  padding-right: 4px;
  border-bottom: 1px solid #10171d;
}
.row-title {
  text-align: right;
  padding-right: 2px;
  color: #c0c5c8;
}
.box {
  height: 30px;
  min-width: 0;
  display: flex;
  align-items: center;
  padding-left: 16px;
  border-radius: 4px;
  background: #25323f;
  white-space: nowrap;
}
.box b, .gsel {
  font-weight: 400;
  color: var(--gold);
}
.box span svg {
  display: inline-block;
  vertical-align: -1px;
  margin-left: 4px;
}
.b-name { padding: 0 4px; }
.b-zname { padding-left: 10px; }
.b-zname .ftype { margin-left: 0; gap: 2px; }
.f72 { width: 72px; }
.f73 { width: 73px; }
.f82 { width: 82px; }
.f94 { width: 94px; }
.f95 { width: 95px; }
.f111 { width: 111px; }
.mute-solo {
  display: flex;
  gap: 1px;
  margin-right: 7px;
}
.mute-solo button {
  width: 24px;
  height: 22px;
  border-radius: 2px;
  background: #344350;
  color: #939ba1;
}
.gsel {
  flex: 1;
  display: flex;
  align-items: center;
}
.gsel select { flex: 1; }
.list-btn {
  width: 24px;
  height: 22px;
  margin-left: 5px;
  border-radius: 3px;
  background: #574618;
}
.map {
  display: flex;
  background: #1e2931;
}
.list-col {
  flex: 330;
  min-width: 0;
}
.rows {
  height: 238px;
  overflow: hidden;
}
.row {
  height: 26px;
  display: flex;
  align-items: center;
  background: #1e2931;
  color: #8f979d;
}
.row:nth-child(even) { background: #222e3b; }
.row.sel { background: #2a3b4a; }
.row.sel.odd .no { background: #1e2931; }
.no {
  width: 54px;
  height: 26px;
  line-height: 26px;
  margin-right: 4px;
  text-align: center;
  border-right: 1px solid #10171d;
}
.scroll {
  height: 16px;
  padding: 4px 17px 4px 1px;
  border-top: 1px solid #000;
  border-bottom: 1px solid #10171d;
}
.thumb {
  height: 7px;
  border-radius: 4px;
  background: #344350;
}
.thumb.mid {
  width: 50%;
  margin-left: 19%;
}
.gutter {
  width: 16px;
  border: solid #000;
  border-width: 0 1px;
  display: flex;
  flex-direction: column;
}
.gutter div { flex: 1; }
.gutter i {
  height: 15px;
  margin: 0 0 1px -1px;
  background: #f5f5f5;
}
.key-col {
  flex: 660;
  min-width: 0;
}
.key-col .scroll { padding-right: 0; }
.keyboard text {
  font-size: 9px;
  fill: #222;
}
.zone {
  grid-template-columns: 50px 166fr 269fr 170fr 159fr 168fr;
  background: #00395c;
  border-bottom: 0;
  height: 38px;
}
.zone .box {
  background: #002942;
}
.pitch {
  height: 22px;
  padding: 0 6px;
  border-radius: 2px;
  background: #154f82;
  color: #8fa0b0;
}
```
